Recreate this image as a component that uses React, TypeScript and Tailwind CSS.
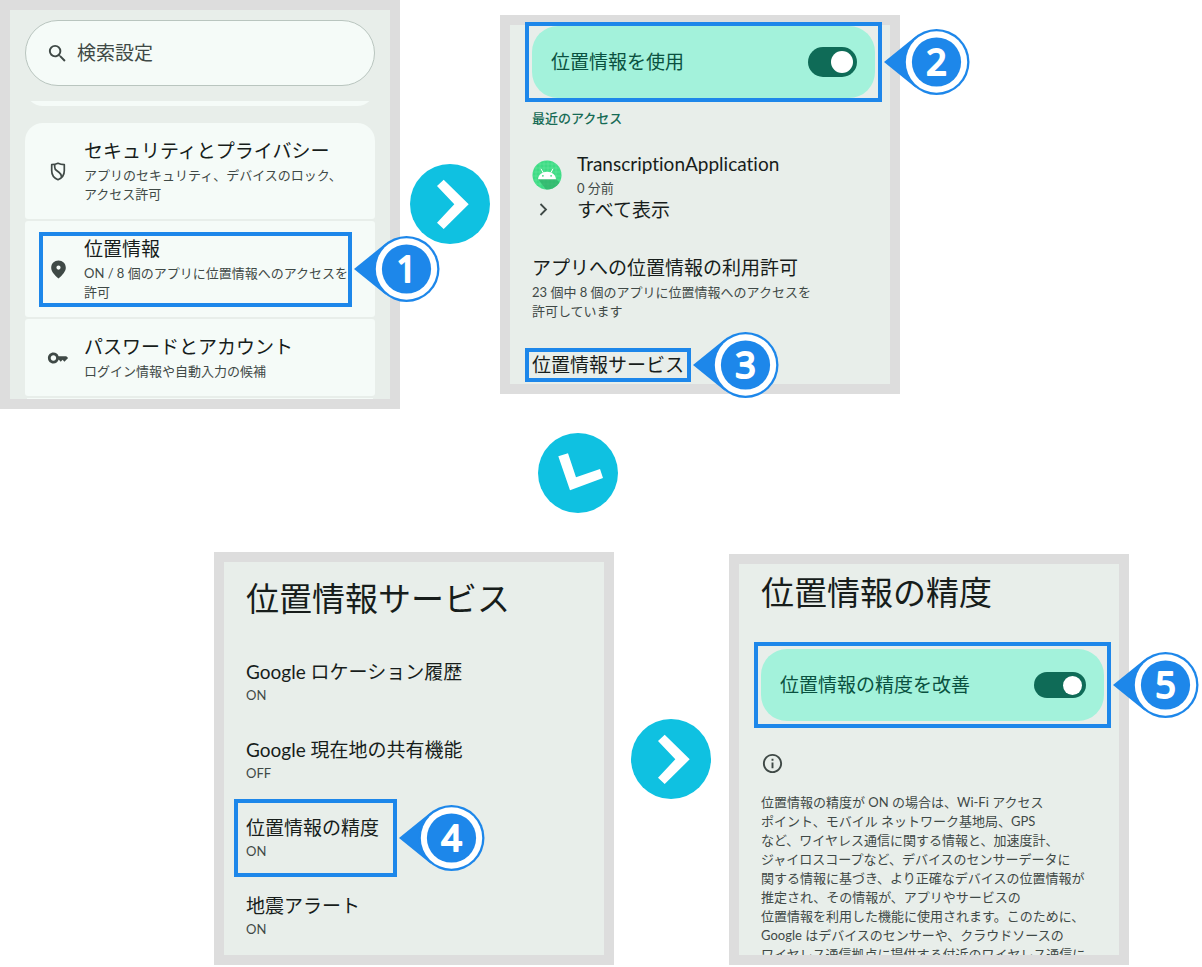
import React from "react";
import clsx from "clsx";
import { MdInfoOutline, MdKey, MdSearch } from "react-icons/md";

const Panel = ({
  className,
  children,
}: {
  className?: string;
  children: React.ReactNode;
}) => (
  <section
    className={clsx(
      "w-full max-w-[400px] border-10 border-[#dddddd] bg-[#e8eeea]",
      className,
    )}
  >
    {children}
  </section>
);

// Numbered marker that points at the highlighted box on its left
const Marker = ({ step }: { step: number }) => (
  <svg
    viewBox="0 0 86 66"
    className="pointer-events-none absolute top-1/2 left-full z-10 ml-1.5 h-[66px] w-[86px] -translate-y-1/2"
  >
    <path d="M0 33 31.8 7.3v51.4z" fill="#1d87ea" />
    <circle cx="52.5" cy="33" r="33" fill="#1d87ea" />
    <circle cx="52.5" cy="33" r="30.7" fill="#fff" />
    <circle cx="52.5" cy="33" r="24.6" fill="#1d87ea" />
    <text
      x="52.5"
      y="46"
      textAnchor="middle"
      fill="#fff"
      stroke="#fff"
      strokeWidth="2"
      strokeLinejoin="round"
      className="font-['Noto_Sans',sans-serif] text-[36px] font-normal"
    >
      {step}
    </text>
  </svg>
);

const Highlight = ({
  step,
  className,
  children,
}: {
  step: number;
  className?: string;
  children: React.ReactNode;
}) => (
  <div className={clsx("relative border-4 border-[#1d87ea]", className)}>
    {children}
    <Marker step={step} />
  </div>
);

const Arrow = ({
  points,
  className,
}: {
  points: string;
  className?: string;
}) => (
  <svg
    viewBox="0 0 80 80"
    className={clsx("h-20 w-20 shrink-0", className)}
    aria-hidden="true"
  >
    <circle cx="40" cy="40" r="40" fill="#0fc1e1" />
    <polygon points={points} fill="#fff" />
  </svg>
);

const RIGHT = "33.7,15.7 58.7,40.3 33.7,65 27,58.7 44.3,40.3 27,22";
const DOWN = "20.3,23.3 30,20.3 38,44.3 62,36 65,45 32,57.3";

const ShieldIcon = () => (
  <svg
    viewBox="0 0 16 19"
    className="h-[19px] w-4"
    fill="none"
    stroke="currentColor"
    strokeWidth="1.7"
    strokeLinejoin="round"
  >
    <path d="M8 1.3c2 .9 4 1.300 6.300 1.400v6c0 4.300-2.600 7.500-6.300 9-3.700-1.500-6.300-4.700-6.300-9v-6C4 2.600 6 2.200 8 1.300z" />
    <path d="M4.700 2.500v2.700c0 1.700.8 2.700 2.200 3.600l2.300 1.700c1.400 1 2.300 2.300 2.300 4.500" />
  </svg>
);

const PinIcon = () => (
  <svg viewBox="0 0 15 19" className="h-[19px] w-[15px]">
    <path
      fillRule="evenodd"
      fill="currentColor"
      d="M7.500.5C3.400.5.2 3.600.2 7.700c0 3.700 3.300 7.300 7.300 10.900 4-3.600 7.300-7.200 7.300-10.900C14.800 3.600 11.600.5 7.500.5zm0 9.200a2.100 2.100 0 1 1 0-4.200 2.100 2.100 0 0 1 0 4.200z"
    />
  </svg>
);

const AndroidIcon = () => (
  <svg viewBox="0 0 30 30" className="h-[30px] w-[30px]">
    <defs>
      <clipPath id="disc">
        <circle cx="15" cy="15" r="14.500" />
      </clipPath>
    </defs>
    <g clipPath="url(#disc)">
      <rect width="30" height="30" fill="#3ddc84" />
      <path
        d="M4 0v30M8 0v30M12 0v30M16 0v30M20 0v30M24 0v30M0 4h30M0 8h30M0 12h30M0 16h30M0 20h30M0 24h30"
        stroke="#6fe5a3"
        strokeWidth=".5"
      />
      <path d="M6 19h18l8 8v8H18z" fill="#2fae68" opacity=".7" />
      <path
        d="m9 8.800 2.200 4M21 8.800l-2.200 4"
        stroke="#fff"
        strokeWidth="1"
        fill="none"
      />
      <path d="M6 19.200c.5-4.700 4.200-7.500 9-7.500s8.500 2.800 9 7.500z" fill="#fff" />
      <circle cx="10.900" cy="15.800" r=".9" fill="#3ddc84" />
      <circle cx="19.100" cy="15.800" r=".9" fill="#3ddc84" />
    </g>
  </svg>
);

const ItemText = ({
  title,
  tight,
  children,
}: {
  title: string;
  tight?: boolean;
  children: React.ReactNode;
}) => (
  <span className="block whitespace-nowrap">
    <span className="block text-[19px] leading-6 text-[#171d1b]">{title}</span>
    <span
      className={clsx(
        "block text-[13px] leading-[19px] text-[#3f4946]",
        tight ? "mt-0.5" : "mt-[3px]",
      )}
    >
      {children}
    </span>
  </span>
);

const SettingLink = ({
  icon,
  title,
  children,
}: {
  icon: React.ReactNode;
  title: string;
  children: React.ReactNode;
}) => (
  <a href="#" className="flex items-center gap-[11px]">
    <span className="flex w-[30px] shrink-0 justify-center text-[#3f4946]">
      {icon}
    </span>
    <ItemText title={title}>{children}</ItemText>
  </a>
);

const ServiceLink = ({ title, status }: { title: string; status: string }) => (
  <a href="#" className="flex h-[70px] items-center">
    <ItemText title={title} tight>
      {status}
    </ItemText>
  </a>
);

const ToggleRow = ({
  id,
  label,
  switchClass,
}: {
  id: string;
  label: string;
  switchClass: string;
}) => (
  <div className="flex h-[72px] items-center justify-between rounded-[26px] bg-[#a3f2db] pr-[18px] pl-[19px]">
    <label htmlFor={id} className="text-[19px] leading-6 text-[#0a5140]">
      {label}
    </label>
    <input
      id={id}
      type="checkbox"
      role="switch"
      defaultChecked
      className={clsx(
        "flex appearance-none items-center rounded-full bg-[#0f6b57] px-1 before:rounded-full before:bg-white checked:justify-end",
        switchClass,
      )}
    />
  </div>
);

export default function App() {
  return (
    <main className="min-h-screen overflow-hidden bg-white font-['Lato','Noto_Sans_CJK_JP',sans-serif] [font-variant-ligatures:none]">
      <div className="flex items-start">
        <Panel>
          <div className="px-[15px] pt-2.5">
            <div className="flex h-[66px] items-center gap-2 rounded-full border border-[#b9c5bf] bg-[#f5fbf8] px-5">
              <MdSearch className="h-[23px] w-[23px] shrink-0 text-[#3f4946]" />
              <input
                type="search"
                aria-label="検索設定"
                placeholder="検索設定"
                className="w-full min-w-0 bg-transparent text-[19px] leading-6 outline-none placeholder:text-[#3f4946]"
              />
            </div>

            {/* bottom edge of the card scrolled under the search bar */}
            <div className="mt-[15px] flex h-[5px] items-end overflow-hidden">
              <div className="h-10 w-full shrink-0 rounded-[18px] bg-[#f5fbf8]" />
            </div>

            <div className="mt-[17px] flex flex-col gap-0.5">
              <div className="flex h-24 items-center rounded-t-[18px] rounded-b-[3px] bg-[#f5fbf8] pl-[18px]">
                <SettingLink
                  icon={<ShieldIcon />}
                  title="セキュリティとプライバシー"
                >
                  アプリのセキュリティ、デバイスのロック、
                  <br />
                  アクセス許可
                </SettingLink>
              </div>
              <div className="flex h-24 items-center rounded-[3px] bg-[#f5fbf8] pr-[23px] pl-3.5">
                <Highlight step={1} className="w-full py-px">
                  <SettingLink icon={<PinIcon />} title="位置情報">
                    ON / 8 個のアプリに位置情報へのアクセスを
                    <br />
                    許可
                  </SettingLink>
                </Highlight>
              </div>
              <div className="flex h-[77px] items-center rounded-[3px] bg-[#f5fbf8] pl-[18px]">
                <SettingLink
                  icon={<MdKey className="h-[22px] w-[22px]" />}
                  title="パスワードとアカウント"
                >
                  ログイン情報や自動入力の候補
                </SettingLink>
              </div>
              <div className="mx-0.5 h-px bg-[#f5fbf8]" />
            </div>
          </div>
        </Panel>

        <Arrow points={RIGHT} className="mx-2.5 mt-[164px]" />

        <Panel className="mt-[15px]">
          <div className="pr-2 pb-0.5 pl-[15px]">
            <Highlight step={2} className="-mt-[3px] px-[3px]">
              <ToggleRow
                id="use-location"
                label="位置情報を使用"
                switchClass="h-[30px] w-[49px] before:h-[22px] before:w-[22px]"
              />
            </Highlight>

            <div className="px-[7px]">
              <h2 className="mt-[7px] text-[13px] leading-[19px] font-medium text-[#166b55]">
                最近のアクセス
              </h2>
              <a href="#" className="mt-6 flex items-center gap-[15px]">
                <AndroidIcon />
                <ItemText title="TranscriptionApplication">0 分前</ItemText>
              </a>
              <a
                href="#"
                className="flex items-center gap-[15px] text-[19px] leading-6 text-[#171d1b]"
              >
                <svg
                  viewBox="0 0 30 24"
                  className="h-6 w-[30px]"
                  fill="none"
                  stroke="#3f4946"
                  strokeWidth="1.800"
                >
                  <path d="m8.500 6 5.500 5.500-5.500 5.500" />
                </svg>
                すべて表示
              </a>
              <a href="#" className="mt-[34px] block">
                <ItemText title="アプリへの位置情報の利用許可">
                  23 個中 8 個のアプリに位置情報へのアクセスを
                  <br />
                  許可しています
                </ItemText>
              </a>
            </div>

            <Highlight step={3} className="mt-[27px] w-fit px-[3px] py-px">
              <a
                href="#"
                className="block text-[19px] leading-6 whitespace-nowrap text-[#171d1b]"
              >
                位置情報サービス
              </a>
            </Highlight>
          </div>
        </Panel>
      </div>

      <Arrow points={DOWN} className="mt-6 ml-[538px]" />

      <div className="mt-[39px] flex items-start pl-[214px]">
        <Panel>
          <h1 className="pt-4 pl-[22px] text-[33px] leading-10 text-[#171d1b]">
            位置情報サービス
          </h1>
          <div className="mt-[25px] flex flex-col items-start pl-2.5">
            <div className="py-1 pl-3">
              <ServiceLink title="Google ロケーション履歴" status="ON" />
            </div>
            <div className="py-1 pl-3">
              <ServiceLink title="Google 現在地の共有機能" status="OFF" />
            </div>
            <Highlight step={4} className="pr-3.5 pl-2">
              <ServiceLink title="位置情報の精度" status="ON" />
            </Highlight>
            <div className="py-1 pl-3">
              <ServiceLink title="地震アラート" status="ON" />
            </div>
          </div>
        </Panel>

        <Arrow points={RIGHT} className="mt-[167px] mr-[18px] ml-[17px]" />

        <Panel className="mt-0.5">
          <h1 className="pt-2 pl-[22px] text-[33px] leading-10 text-[#171d1b]">
            位置情報の精度
          </h1>
          <div className="mt-[30px] pr-2 pl-[15px]">
            <Highlight step={5} className="p-[3px]">
              <ToggleRow
                id="improve-accuracy"
                label="位置情報の精度を改善"
                switchClass="h-[26px] w-[52px] before:h-[19px] before:w-[19px]"
              />
            </Highlight>
          </div>
          <div className="pl-[22px] text-[#3f4946]">
            <MdInfoOutline className="mt-6 h-[23px] w-[23px]" />
            <p className="mt-[18px] h-[162px] overflow-hidden text-[13px] leading-[19px] whitespace-nowrap">
              位置情報の精度が ON の場合は、Wi-Fi アクセス
              <br />
              ポイント、モバイル ネットワーク基地局、GPS
              <br />
              など、ワイヤレス通信に関する情報と、加速度計、
              <br />
              ジャイロスコープなど、デバイスのセンサーデータに
              <br />
              関する情報に基づき、より正確なデバイスの位置情報が
              <br />
              推定され、その情報が、アプリやサービスの
              <br />
              位置情報を利用した機能に使用されます。このために、
              <br />
              Google はデバイスのセンサーや、クラウドソースの
              <br />
              ワイヤレス通信拠点に提供する付近のワイヤレス通信に
            </p>
          </div>
        </Panel>
      </div>
    </main>
  );
}
